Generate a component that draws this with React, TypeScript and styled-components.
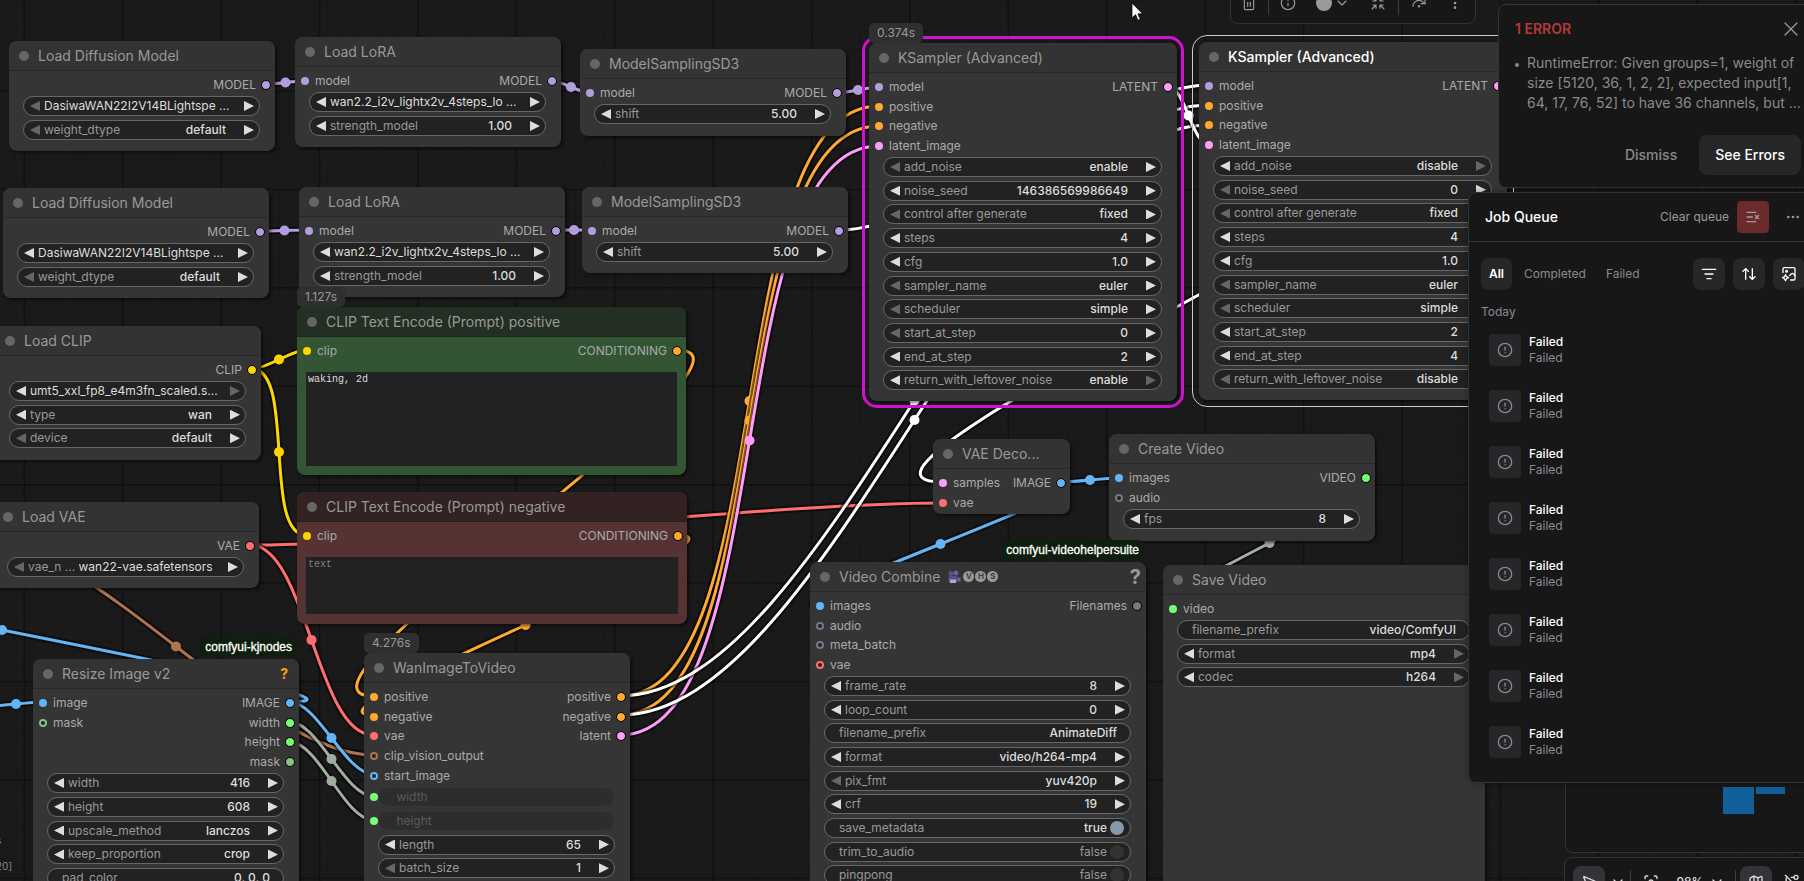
import React from 'react';
import styled, { createGlobalStyle, css } from 'styled-components';
import {
  ArrowUpDown,
  ChevronDown,
  CircleAlert,
  Ellipsis,
  EllipsisVertical,
  Focus,
  Info,
  ListFilter,
  ListX,
  Map as MapIcon,
  MousePointer2,
  RedoDot,
  RouteOff,
  Shrink,
  Trash2,
  X,
} from 'lucide-react';

const GlobalStyle = createGlobalStyle`
  *, *::before, *::after { box-sizing: border-box; }
  body {
    margin: 0;
    background: #1a1a1a;
    color: #aaa;
    font-family: Inter, "Liberation Sans", sans-serif;
    font-size: 12px;
    line-height: 16px;
  }
  button, input, select, textarea { font: inherit; color: inherit; }
  button { border: 0; padding: 0; background: none; cursor: pointer; }
`;

/* ---------- colours of the slot types ---------- */

const C = {
  model: '#b39ddb',
  cond: '#ffa931',
  latent: '#ff9cf9',
  clip: '#ffd500',
  vae: '#ff6e6e',
  image: '#64b5f6',
  mask: '#81c784',
  vision: '#ad7452',
  number: '#77ff77',
  plain: '#778',
  link: '#9fae9f',
  hot: '#ffffff',
};

/* ---------- canvas ---------- */

const Page = styled.main`
  position: relative;
  width: 100%;
  height: 100vh;
  overflow: hidden;
  background: #1a1a1a;
`;

const Wires = styled.svg`
  position: absolute;
  inset: 0;
  width: 100%;
  height: 100%;
`;

type Wire = [number, number, number, number, string];

const wires: Wire[] = [
  [250, 545, 942, 503, C.vae],
  [250, 545, 373, 735, C.vae],
  [-21, 538, 373, 755, C.vision],
  [677, 350, 373, 696, C.cond],
  [678, 535, 373, 715, C.cond],
  [252, 369, 306, 350, C.clip],
  [252, 369, 306, 535, C.clip],
  [266, 84, 305, 81, C.model],
  [260, 231, 309, 230, C.model],
  [552, 81, 590, 93, C.model],
  [556, 230, 592, 230, C.model],
  [837, 93, 879, 87, C.model],
  [290, 702, -286, 558, C.image],
  [-11, 706, 43, 702, C.image],
  [290, 702, 373, 774, C.image],
  [290, 722, 373, 796, C.link],
  [290, 742, 373, 820, C.link],
  [620, 696, 879, 106, C.cond],
  [620, 715, 879, 126, C.cond],
  [620, 735, 879, 146, C.latent],
  [1061, 482, 820, 606, C.image],
  [1061, 482, 1119, 478, C.image],
  [1366, 478, 1173, 608, C.link],
  [839, 230, 1209, 85, C.hot],
  [620, 696, 1209, 105, C.hot],
  [620, 715, 1209, 125, C.hot],
  [1168, 87, 1209, 144, C.hot],
  [1497, 85, 942, 482, C.hot],
];

function WireLayer() {
  return (
    <Wires aria-hidden="true">
      <defs>
        <pattern id="grid" x="23.6" y="90.4" width="98.4" height="98.4" patternUnits="userSpaceOnUse">
          {[1, 2, 3, 4, 5, 6, 7, 8, 9].map((i) => (
            <path
              key={i}
              d={`M${i * 9.84} 0V98.4M0 ${i * 9.84}H98.4`}
              stroke="#161616"
              strokeWidth="1"
            />
          ))}
          <path d="M0 0V98.4M0 0H98.4" stroke="#0f0f0f" strokeWidth="3" />
        </pattern>
      </defs>
      <rect width="100%" height="100%" fill="url(#grid)" />
      {wires.map(([x1, y1, x2, y2, color], i) => {
        const k = Math.hypot(x2 - x1, y2 - y1) * 0.25;
        const d = `M${x1} ${y1}C${x1 + k} ${y1} ${x2 - k} ${y2} ${x2} ${y2}`;
        return (
          <g key={i} fill="none">
            <path d={d} stroke="rgba(0,0,0,0.5)" strokeWidth="7" />
            <path d={d} stroke={color} strokeWidth="3" />
            <circle cx={(x1 + x2) / 2} cy={(y1 + y2) / 2} r="5" fill={color} />
          </g>
        );
      })}
    </Wires>
  );
}

/* ---------- node parts ---------- */

const themes = {
  gray: { head: '#333', body: '#353535' },
  green: { head: '#232f23', body: '#335533' },
  red: { head: '#332222', body: '#553333' },
};
type Tone = keyof typeof themes;

const NodeCard = styled.section<{
  $x: number;
  $y: number;
  $w: number;
  $h: number;
  $tone: Tone;
  $ring?: 'running' | 'selected';
}>`
  position: absolute;
  left: ${(p) => p.$x}px;
  top: ${(p) => p.$y}px;
  width: ${(p) => p.$w}px;
  height: ${(p) => p.$h}px;
  display: flex;
  flex-direction: column;
  border-radius: 8px;
  background: ${(p) => themes[p.$tone].body};
  box-shadow: 2px 2px 3px rgba(0, 0, 0, 0.5);
  ${(p) =>
    p.$ring === 'running' &&
    css`
      outline: 3px solid #d40fd4;
      outline-offset: 4px;
    `}
  ${(p) =>
    p.$ring === 'selected' &&
    css`
      outline: 1px solid #ccc;
      outline-offset: 6px;
    `}
`;

const NodeHead = styled.header<{ $tone: Tone; $lit?: boolean }>`
  display: flex;
  align-items: center;
  gap: 9px;
  height: 30px;
  flex: none;
  padding: 0 11px 0 10px;
  border-bottom: 1px solid rgba(0, 0, 0, 0.2);
  border-radius: 8px 8px 0 0;
  background: ${(p) => themes[p.$tone].head};
  color: ${(p) => (p.$lit ? '#fff' : '#999')};
`;

const Bullet = styled.i`
  width: 10px;
  height: 10px;
  flex: none;
  border-radius: 50%;
  background: #666;
`;

const NodeTitle = styled.h2<{ $lit?: boolean }>`
  margin: 0;
  font-size: 14px;
  line-height: 20px;
  font-weight: ${(p) => (p.$lit ? 500 : 400)};
  white-space: nowrap;
`;

const Help = styled.button<{ $big?: boolean }>`
  margin: 0 ${(p) => (p.$big ? '-6px' : '0')} 0 auto;
  font-size: ${(p) => (p.$big ? '20px' : '14px')};
  font-weight: 700;
  line-height: 20px;
  color: ${(p) => (p.$big ? '#999' : '#ffa500')};
`;

const Slots = styled.div`
  display: flex;
  justify-content: space-between;
  flex: none;
  padding: 4px 4px 1px 5px;
`;

const SlotList = styled.ul<{ $rows: number }>`
  display: grid;
  grid-template-rows: repeat(${(p) => p.$rows}, 1fr);
  height: ${(p) => Math.ceil(p.$rows * 19.68)}px;
  margin: 0;
  padding: 0;
  list-style: none;
`;

const SlotItem = styled.li<{ $out?: boolean }>`
  display: flex;
  flex-direction: ${(p) => (p.$out ? 'row-reverse' : 'row')};
  align-items: center;
  gap: 5px;
  white-space: nowrap;
`;

const Dot = styled.i<{ $color: string; $out?: boolean; $open?: boolean }>`
  width: ${(p) => (p.$out ? 10 : 8)}px;
  height: ${(p) => (p.$out ? 10 : 8)}px;
  flex: none;
  margin: 0 ${(p) => (p.$out ? 0 : 1)}px;
  border-radius: 50%;
  border: ${(p) => (p.$out ? '1px solid #000' : p.$open ? `2px solid ${p.$color}` : '0')};
  background: ${(p) => (p.$open ? '#222' : p.$color)};
`;

const WidgetList = styled.div<{ $rows: number }>`
  display: grid;
  grid-template-rows: repeat(${(p) => p.$rows}, 1fr);
  flex: none;
  height: ${(p) => Math.ceil(p.$rows * 23.62)}px;
  padding: 0 15px 0 14px;
`;

const WidgetBox = styled.div<{ $plain?: boolean; $linked?: boolean }>`
  position: relative;
  display: flex;
  align-items: center;
  height: 20px;
  padding: ${(p) => (p.$plain ? '0 13px 0 14px' : '0 5px 0 6px')};
  border: 1px solid ${(p) => (p.$linked ? 'transparent' : '#666')};
  border-radius: 10px;
  background: ${(p) => (p.$linked ? '#2d2d2d' : '#222')};
  background-clip: padding-box;
  white-space: nowrap;
`;

const WidgetSocket = styled.span`
  position: absolute;
  left: -10px;
  top: 5px;
  display: flex;
`;

const WidgetLabel = styled.label<{ $dim?: boolean }>`
  flex: none;
  color: ${(p) => (p.$dim ? '#5c5c5c' : '#999')};
`;

const valueStyle = css`
  flex: 1;
  width: 0;
  min-width: 0;
  height: 16px;
  margin: 0;
  padding: 0;
  border: 0;
  outline: 0;
  background: none;
  appearance: none;
  color: #ddd;
  font-weight: 500;
`;

const ValueInput = styled.input`
  ${valueStyle}
  text-align: right;
`;

const ValueSelect = styled.select<{ $long?: boolean }>`
  ${valueStyle}
  font-weight: ${(p) => (p.$long ? 400 : 500)};
  text-align-last: ${(p) => (p.$long ? 'left' : 'right')};
  option { color: #ddd; background: #222; }
`;

const ArrowButton = styled.button<{ $dir: 'left' | 'right'; $off?: boolean; $tight?: boolean }>`
  width: 10px;
  height: 10px;
  flex: none;
  background: ${(p) => (p.$off ? '#666' : '#ddd')};
  clip-path: ${(p) =>
    p.$dir === 'left' ? 'polygon(100% 0, 100% 100%, 0 50%)' : 'polygon(0 0, 100% 50%, 0 100%)'};
  margin: ${(p) => (p.$dir === 'left' ? '0 4px 0 0' : p.$tight ? '0 0 0 8px' : '0 0 0 18px')};
`;

const ToggleText = styled.span<{ $on?: boolean }>`
  margin-left: auto;
  color: ${(p) => (p.$on ? '#ddd' : '#999')};
  font-weight: ${(p) => (p.$on ? 500 : 400)};
`;

const Toggle = styled.input`
  appearance: none;
  width: 14px;
  height: 14px;
  margin: 0 -7px 0 3px;
  border-radius: 50%;
  background: #333;
  &:checked { background: #8899aa; }
`;

const PromptText = styled.textarea<{ $h: number }>`
  display: block;
  height: ${(p) => p.$h}px;
  margin: 10px 9px 0;
  padding: 2px;
  border: 0;
  outline: 0;
  resize: none;
  background: #222;
  color: #ddd;
  font-family: "Liberation Mono", monospace;
  font-size: 10px;
  line-height: 12px;
  &::placeholder { color: #808080; }
`;

const Badge = styled.span<{ $pack?: boolean }>`
  position: absolute;
  bottom: ${(p) => (p.$pack ? 'calc(100% + 2px)' : '100%')};
  ${(p) => (p.$pack ? 'right: 2px;' : 'left: 0;')}
  padding: 2px ${(p) => (p.$pack ? 5 : 8)}px 2px;
  border-radius: 5px;
  background: ${(p) => (p.$pack ? '#0f1f0f' : '#2f2f2f')};
  color: ${(p) => (p.$pack ? '#fff' : '#999')};
  font-family: ${(p) => (p.$pack ? '"Liberation Sans", sans-serif' : 'inherit')};
  -webkit-text-stroke: ${(p) => (p.$pack ? '0.3px #fff' : '0')};
`;

/* ---------- node model ---------- */

type Slot = { name: string; color: string; open?: boolean };
type Widget = {
  name?: string;
  value?: string;
  kind?: 'combo' | 'number' | 'text' | 'toggle' | 'linked';
  off?: 'left' | 'right';
  long?: boolean;
};
type NodeSpec = {
  title: string;
  x: number;
  y: number;
  w: number;
  h: number;
  tone?: Tone;
  ring?: 'running' | 'selected';
  time?: string;
  pack?: string;
  help?: 'small' | 'big';
  inputs?: Slot[];
  outputs?: Slot[];
  widgets?: Widget[];
  prompt?: { value?: string; placeholder?: string; h: number };
  extra?: React.ReactNode;
};

const s = (name: string, color: string, open?: boolean): Slot => ({ name, color, open });

const VhsMark = styled.span`
  display: flex;
  gap: 1px;
  align-items: center;
  margin-left: -3px;
`;

const VhsLetter = styled.b`
  width: 11px;
  height: 11px;
  border-radius: 50%;
  background: #999;
  color: #333;
  font-size: 8px;
  line-height: 11px;
  font-weight: 600;
  text-align: center;
`;

const vhs = (
  <VhsMark>
    <svg width="16" height="14" viewBox="0 0 16 14" aria-hidden="true">
      <circle cx="5" cy="3.500" r="2.500" fill="#5b4c8c" />
      <circle cx="10" cy="3" r="2.500" fill="#6c5ca0" />
      <rect x="2.500" y="6" width="9" height="6.500" rx="1" fill="#5b4c8c" />
      <path d="M11 8.500l3.500-1.500v5L11 11z" fill="#6c5ca0" />
      <rect x="4" y="9.500" width="6" height="3.500" fill="#b0a8cc" />
    </svg>
    <VhsLetter>V</VhsLetter>
    <VhsLetter>H</VhsLetter>
    <VhsLetter>S</VhsLetter>
  </VhsMark>
);

const samplerInputs = [
  s('model', C.model),
  s('positive', C.cond),
  s('negative', C.cond),
  s('latent_image', C.latent),
];

const nodes: NodeSpec[] = [
  {
    title: 'Load Diffusion Model', x: 9, y: 41, w: 266, h: 110,
    outputs: [s('MODEL', C.model)],
    widgets: [
      { value: 'DasiwaWAN22I2V14BLightspe ...', off: 'left', long: true },
      { name: 'weight_dtype', value: 'default', off: 'left' },
    ],
  },
  {
    title: 'Load Diffusion Model', x: 3, y: 188, w: 266, h: 110,
    outputs: [s('MODEL', C.model)],
    widgets: [
      { value: 'DasiwaWAN22I2V14BLightspe ...', long: true },
      { name: 'weight_dtype', value: 'default', off: 'left' },
    ],
  },
  {
    title: 'Load LoRA', x: 295, y: 37, w: 266, h: 110,
    inputs: [s('model', C.model)],
    outputs: [s('MODEL', C.model)],
    widgets: [
      { value: 'wan2.2_i2v_lightx2v_4steps_lo ...', long: true },
      { name: 'strength_model', value: '1.00', kind: 'number' },
    ],
  },
  {
    title: 'Load LoRA', x: 299, y: 187, w: 266, h: 110,
    inputs: [s('model', C.model)],
    outputs: [s('MODEL', C.model)],
    widgets: [
      { value: 'wan2.2_i2v_lightx2v_4steps_lo ...', long: true },
      { name: 'strength_model', value: '1.00', kind: 'number' },
    ],
  },
  {
    title: 'ModelSamplingSD3', x: 580, y: 49, w: 266, h: 87,
    inputs: [s('model', C.model)],
    outputs: [s('MODEL', C.model)],
    widgets: [{ name: 'shift', value: '5.00', kind: 'number' }],
  },
  {
    title: 'ModelSamplingSD3', x: 582, y: 187, w: 266, h: 86,
    inputs: [s('model', C.model)],
    outputs: [s('MODEL', C.model)],
    widgets: [{ name: 'shift', value: '5.00', kind: 'number' }],
  },
  {
    title: 'Load CLIP', x: -5, y: 326, w: 266, h: 134,
    outputs: [s('CLIP', C.clip)],
    widgets: [
      { value: 'umt5_xxl_fp8_e4m3fn_scaled.s...', off: 'right', long: true },
      { name: 'type', value: 'wan' },
      { name: 'device', value: 'default', off: 'left' },
    ],
  },
  {
    title: 'Load VAE', x: -7, y: 502, w: 266, h: 86,
    outputs: [s('VAE', C.vae)],
    widgets: [{ name: 'vae_n ...\u00a0', value: 'wan22-vae.safetensors', off: 'left', long: true }],
  },
  {
    title: 'CLIP Text Encode (Prompt) positive', x: 297, y: 307, w: 389, h: 168, tone: 'green',
    time: '1.127s',
    inputs: [s('clip', C.clip)],
    outputs: [s('CONDITIONING', C.cond)],
    prompt: { value: 'waking, 2d', h: 94 },
  },
  {
    title: 'CLIP Text Encode (Prompt) negative', x: 297, y: 492, w: 390, h: 132, tone: 'red',
    inputs: [s('clip', C.clip)],
    outputs: [s('CONDITIONING', C.cond)],
    prompt: { placeholder: 'text', h: 57 },
  },
  {
    title: 'Resize Image v2', x: 33, y: 659, w: 266, h: 300, pack: 'comfyui-kjnodes', help: 'small',
    inputs: [s('image', C.image), s('mask', C.mask, true)],
    outputs: [s('IMAGE', C.image), s('width', C.number), s('height', C.number), s('mask', C.mask)],
    widgets: [
      { name: 'width', value: '416', kind: 'number' },
      { name: 'height', value: '608', kind: 'number' },
      { name: 'upscale_method', value: 'lanczos' },
      { name: 'keep_proportion', value: 'crop' },
      { name: 'pad_color', value: '0, 0, 0', kind: 'text' },
    ],
  },
  {
    title: 'WanImageToVideo', x: 364, y: 653, w: 266, h: 300, time: '4.276s',
    inputs: [
      s('positive', C.cond),
      s('negative', C.cond),
      s('vae', C.vae),
      s('clip_vision_output', C.vision, true),
      s('start_image', C.image, true),
    ],
    outputs: [s('positive', C.cond), s('negative', C.cond), s('latent', C.latent)],
    widgets: [
      { name: 'width', kind: 'linked' },
      { name: 'height', kind: 'linked' },
      { name: 'length', value: '65', kind: 'number' },
      { name: 'batch_size', value: '1', kind: 'number', off: 'left' },
    ],
  },
  {
    title: 'KSampler (Advanced)', x: 869, y: 43, w: 308, h: 358, ring: 'running', time: '0.374s',
    inputs: samplerInputs,
    outputs: [s('LATENT', C.latent)],
    widgets: [
      { name: 'add_noise', value: 'enable', off: 'left' },
      { name: 'noise_seed', value: '146386569986649', kind: 'number' },
      { name: 'control after generate', value: 'fixed', off: 'left' },
      { name: 'steps', value: '4', kind: 'number' },
      { name: 'cfg', value: '1.0', kind: 'number' },
      { name: 'sampler_name', value: 'euler', off: 'left' },
      { name: 'scheduler', value: 'simple', off: 'left' },
      { name: 'start_at_step', value: '0', kind: 'number', off: 'left' },
      { name: 'end_at_step', value: '2', kind: 'number' },
      { name: 'return_with_leftover_noise', value: 'enable', off: 'right' },
    ],
  },
  {
    title: 'KSampler (Advanced)', x: 1199, y: 42, w: 308, h: 358, ring: 'selected',
    inputs: samplerInputs,
    outputs: [s('LATENT', C.latent)],
    widgets: [
      { name: 'add_noise', value: 'disable', off: 'right' },
      { name: 'noise_seed', value: '0', kind: 'number', off: 'left' },
      { name: 'control after generate', value: 'fixed', off: 'left' },
      { name: 'steps', value: '4', kind: 'number' },
      { name: 'cfg', value: '1.0', kind: 'number' },
      { name: 'sampler_name', value: 'euler', off: 'left' },
      { name: 'scheduler', value: 'simple', off: 'left' },
      { name: 'start_at_step', value: '2', kind: 'number' },
      { name: 'end_at_step', value: '4', kind: 'number' },
      { name: 'return_with_leftover_noise', value: 'disable', off: 'left' },
    ],
  },
  {
    title: 'VAE Deco...', x: 933, y: 439, w: 137, h: 75,
    inputs: [s('samples', C.latent), s('vae', C.vae)],
    outputs: [s('IMAGE', C.image)],
  },
  {
    title: 'Create Video', x: 1109, y: 434, w: 266, h: 107,
    inputs: [s('images', C.image), s('audio', C.plain, true)],
    outputs: [s('VIDEO', C.number)],
    widgets: [{ name: 'fps', value: '8', kind: 'number' }],
  },
  {
    title: 'Video Combine', x: 810, y: 562, w: 336, h: 420, pack: 'comfyui-videohelpersuite',
    help: 'big',
    extra: vhs,
    inputs: [
      s('images', C.image),
      s('audio', C.plain, true),
      s('meta_batch', C.plain, true),
      s('vae', C.vae, true),
    ],
    outputs: [s('Filenames', C.plain)],
    widgets: [
      { name: 'frame_rate', value: '8', kind: 'number' },
      { name: 'loop_count', value: '0', kind: 'number' },
      { name: 'filename_prefix', value: 'AnimateDiff', kind: 'text' },
      { name: 'format', value: 'video/h264-mp4' },
      { name: 'pix_fmt', value: 'yuv420p', off: 'left' },
      { name: 'crf', value: '19', kind: 'number' },
      { name: 'save_metadata', value: 'true', kind: 'toggle' },
      { name: 'trim_to_audio', value: 'false', kind: 'toggle' },
      { name: 'pingpong', value: 'false', kind: 'toggle' },
    ],
  },
  {
    title: 'Save Video', x: 1163, y: 565, w: 322, h: 400,
    inputs: [s('video', C.number)],
    widgets: [
      { name: 'filename_prefix', value: 'video/ComfyUI', kind: 'text' },
      { name: 'format', value: 'mp4', off: 'right' },
      { name: 'codec', value: 'h264', off: 'right' },
    ],
  },
];

function WidgetRow({ widget, id }: { widget: Widget; id: string }) {
  const { name, value = '', kind = 'combo', off, long } = widget;
  if (kind === 'linked') {
    return (
      <WidgetBox $plain $linked>
        <WidgetSocket>
          <Dot $color={C.number} />
        </WidgetSocket>
        <WidgetLabel as="span" $dim>&nbsp;{name}</WidgetLabel>
      </WidgetBox>
    );
  }
  if (kind === 'toggle') {
    return (
      <WidgetBox $plain>
        <WidgetLabel htmlFor={id}>{name}</WidgetLabel>
        <ToggleText $on={value === 'true'}>{value}</ToggleText>
        <Toggle id={id} type="checkbox" defaultChecked={value === 'true'} />
      </WidgetBox>
    );
  }
  if (kind === 'text') {
    return (
      <WidgetBox $plain>
        <WidgetLabel htmlFor={id}>{name}</WidgetLabel>
        <ValueInput id={id} type="text" defaultValue={value} />
      </WidgetBox>
    );
  }
  return (
    <WidgetBox>
      <ArrowButton type="button" aria-label="Previous" $dir="left" $off={off === 'left'} />
      {name && <WidgetLabel htmlFor={id}>{name}</WidgetLabel>}
      {kind === 'number' ? (
        <ValueInput id={id} type="text" inputMode="decimal" defaultValue={value} />
      ) : (
        <ValueSelect id={id} aria-label={name ?? 'Model file'} defaultValue={value} $long={long}>
          <option value={value}>{value}</option>
        </ValueSelect>
      )}
      <ArrowButton type="button" aria-label="Next" $dir="right" $off={off === 'right'} $tight={long} />
    </WidgetBox>
  );
}

function GraphNode({ node, id }: { node: NodeSpec; id: string }) {
  const tone = node.tone ?? 'gray';
  const lit = node.ring === 'selected';
  const inputs = node.inputs ?? [];
  const outputs = node.outputs ?? [];
  const rows = Math.max(inputs.length, outputs.length);
  return (
    <NodeCard $x={node.x} $y={node.y} $w={node.w} $h={node.h} $tone={tone} $ring={node.ring}>
      {node.time && <Badge>{node.time}</Badge>}
      {node.pack && <Badge $pack>{node.pack}</Badge>}
      <NodeHead $tone={tone} $lit={lit}>
        <Bullet />
        <NodeTitle $lit={lit}>{node.title}</NodeTitle>
        {node.extra}
        {node.help && (
          <Help type="button" $big={node.help === 'big'}>
            ?
          </Help>
        )}
      </NodeHead>
      <Slots>
        <SlotList $rows={rows}>
          {inputs.map((slot) => (
            <SlotItem key={slot.name}>
              <Dot $color={slot.color} $open={slot.open} />
              {slot.name}
            </SlotItem>
          ))}
        </SlotList>
        <SlotList $rows={rows}>
          {outputs.map((slot) => (
            <SlotItem key={slot.name} $out>
              <Dot $color={slot.color} $out />
              {slot.name}
            </SlotItem>
          ))}
        </SlotList>
      </Slots>
      {node.widgets && (
        <WidgetList $rows={node.widgets.length}>
          {node.widgets.map((w, i) => (
            <WidgetRow key={i} widget={w} id={`${id}-${i}`} />
          ))}
        </WidgetList>
      )}
      {node.prompt && (
        <PromptText
          aria-label={node.title}
          spellCheck={false}
          $h={node.prompt.h}
          defaultValue={node.prompt.value}
          placeholder={node.prompt.placeholder}
        />
      )}
    </NodeCard>
  );
}

/* ---------- floating chrome ---------- */

const panel = css`
  position: absolute;
  background: #171718;
  border: 1px solid #333436;
`;

const SelectionBar = styled.div`
  ${panel}
  top: -18px;
  right: 328px;
  height: 42px;
  display: flex;
  align-items: center;
  padding: 0 12px 0 10px;
  border-radius: 8px;
  color: #9a9a9a;
`;

const BarGroup = styled.div`
  display: flex;
  align-items: center;
  gap: 20px;
`;

const BarButton = styled.button`
  display: flex;
  align-items: center;
  justify-content: center;
  gap: 2px;
  height: 32px;
`;

const Rule = styled.i<{ $gap?: number }>`
  width: 1px;
  height: 24px;
  flex: none;
  margin: 0 ${(p) => p.$gap ?? 0}px;
  background: #3c3d40;
`;

const Swatch = styled.i`
  width: 16px;
  height: 16px;
  border-radius: 50%;
  background: #9a9a9a;
`;

const ErrorPanel = styled.section`
  ${panel}
  top: 4px;
  right: -15px;
  width: 321px;
  display: flex;
  flex-direction: column;
  padding: 12px 17px 12px 16px;
  border-radius: 8px;
`;

const ErrorHead = styled.header`
  display: flex;
  align-items: center;
  justify-content: space-between;
  height: 24px;
`;

const ErrorTitle = styled.h2`
  margin: 0;
  font-size: 14px;
  line-height: 20px;
  font-weight: 600;
  color: #b33a3a;
`;

const IconButton = styled.button`
  display: flex;
  margin-right: -2px;
  color: #9a9a9a;
`;

const ErrorList = styled.ul`
  margin: 12px 0 22px;
  padding-left: 12px;
  font-size: 14px;
  line-height: 20px;
  color: #8a8a8a;
  list-style: none;
  li { position: relative; margin-right: -4px; }
  li::before {
    content: "";
    position: absolute;
    left: -12px;
    top: 10px;
    width: 4px;
    height: 4px;
    border-radius: 50%;
    background: #8a8a8a;
  }
`;

const ErrorActions = styled.footer`
  display: flex;
  justify-content: flex-end;
  gap: 6px;
`;

const ActionButton = styled.button<{ $main?: boolean }>`
  height: 40px;
  padding: 0 16px;
  border-radius: 8px;
  font-size: 14px;
  line-height: 20px;
  font-weight: 500;
  color: ${(p) => (p.$main ? '#fff' : '#8a8a8a')};
  background: ${(p) => (p.$main ? '#262729' : 'none')};
`;

const QueuePanel = styled.aside`
  ${panel}
  top: 192px;
  right: -15px;
  width: 351px;
  border-radius: 8px;
  padding-bottom: 24px;
  box-shadow: 0 0 6px rgba(0, 0, 0, 0.4);
`;

const QueueHead = styled.header`
  display: flex;
  align-items: center;
  height: 49px;
  padding: 0 15px 0 16px;
  border-bottom: 1px solid #333436;
`;

const QueueTitle = styled.h2`
  margin: 0 auto 0 0;
  font-size: 14px;
  line-height: 20px;
  font-weight: 500;
  color: #fff;
`;

const ClearLabel = styled.span`
  margin-right: 8px;
  color: #9a9a9a;
`;

const SquareButton = styled.button<{ $danger?: boolean }>`
  display: flex;
  align-items: center;
  justify-content: center;
  width: 32px;
  height: 32px;
  flex: none;
  border-radius: ${(p) => (p.$danger ? 4 : 8)}px;
  color: ${(p) => (p.$danger ? '#a89a9a' : '#fff')};
  background: ${(p) => (p.$danger ? '#6b2a2c' : '#262729')};
`;

const MoreButton = styled.button`
  display: flex;
  margin-left: 16px;
  width: 18px;
  color: #9a9a9a;
`;

const Filters = styled.div`
  display: flex;
  align-items: center;
  gap: 8px;
  padding: 16px 13px 0 12px;
`;

const Tabs = styled.div`
  display: flex;
  margin-right: auto;
`;

const Tab = styled.button<{ $on?: boolean }>`
  height: 32px;
  padding: 0 ${(p) => (p.$on ? 8 : 10)}px;
  margin-right: ${(p) => (p.$on ? 2 : 0)}px;
  border-radius: 8px;
  color: ${(p) => (p.$on ? '#fff' : '#8a8a8a')};
  background: ${(p) => (p.$on ? '#262729' : 'none')};
  font-weight: ${(p) => (p.$on ? 600 : 400)};
`;

const DayLabel = styled.h3`
  margin: 14px 12px;
  font-size: 12px;
  line-height: 16px;
  font-weight: 400;
  color: #8a8992;
`;

const Jobs = styled.ul`
  display: flex;
  flex-direction: column;
  gap: 24px;
  margin: 0;
  padding: 0 20px;
  list-style: none;
`;

const Job = styled.li`
  display: flex;
  align-items: center;
  gap: 8px;
`;

const JobIcon = styled.span`
  display: flex;
  align-items: center;
  justify-content: center;
  width: 32px;
  height: 32px;
  border-radius: 4px;
  background: #262729;
  color: #8a8992;
`;

const JobText = styled.p`
  margin: 0;
  display: flex;
  flex-direction: column;
  color: #8a8992;
  strong { color: #fff; font-weight: 500; }
`;

const MiniMap = styled.div`
  ${panel}
  right: -15px;
  bottom: 28px;
  width: 254px;
  height: 100px;
  border-radius: 8px;
  svg { display: block; }
`;

const ViewBar = styled.div`
  ${panel}
  right: -15px;
  bottom: -25px;
  width: 255px;
  height: 49px;
  display: flex;
  align-items: center;
  padding: 0 8px;
  border-radius: 8px;
  color: #ddd;
`;

const ViewButton = styled.button<{ $w: number; $on?: boolean }>`
  display: flex;
  align-items: center;
  justify-content: center;
  width: ${(p) => p.$w}px;
  height: 32px;
  flex: none;
  border-radius: 8px;
  font-weight: 500;
  background: ${(p) => (p.$on ? '#333437' : 'none')};
`;

const MapGroup = styled.div`
  display: flex;
  align-items: center;
  gap: 4px;
  margin-left: 10px;
`;

const CanvasInfo = styled.div`
  position: absolute;
  left: -4px;
  bottom: 7px;
  display: flex;
  flex-direction: column;
  gap: 10px;
  font-size: 10px;
  line-height: 16px;
  color: #888;
`;

const Pointer = styled.svg`
  position: absolute;
  left: 1131px;
  top: 2px;
`;

function AssetsIcon() {
  return (
    <svg width="16" height="16" viewBox="0 0 16 16" fill="none" stroke="currentColor" strokeWidth="1.300" strokeLinecap="round" strokeLinejoin="round">
      <path d="M2 6.500V3a1.300 1.300 0 0 1 1.300-1.300h9.400A1.300 1.300 0 0 1 14 3v9.700a1.300 1.300 0 0 1-1.300 1.300H9.500" />
      <circle cx="5.600" cy="5.300" r="0.900" />
      <path d="M14 9.500l-1.700-1.700a1.300 1.300 0 0 0-1.900 0L8.700 9.500" />
      <path d="M4.500 8.700l1 2 2 1-2 1-1 2-1-2-2-1 2-1z" />
    </svg>
  );
}

export default function App() {
  return (
    <Page>
      <GlobalStyle />
      <WireLayer />
      <CanvasInfo>
        <span>s</span>
        <span>20]</span>
      </CanvasInfo>
      {nodes.map((node, i) => (
        <GraphNode key={i} node={node} id={`node${i}`} />
      ))}

      <SelectionBar role="toolbar" aria-label="Selection">
        <BarButton type="button" aria-label="Delete"><Trash2 size={16} strokeWidth={1.75} /></BarButton>
        <Rule $gap={11} />
        <BarGroup>
          <BarButton type="button" aria-label="Info"><Info size={16} strokeWidth={1.75} /></BarButton>
          <BarButton type="button" aria-label="Color">
            <Swatch />
            <ChevronDown size={16} strokeWidth={1.75} />
          </BarButton>
          <BarButton type="button" aria-label="Collapse"><Shrink size={16} strokeWidth={1.75} /></BarButton>
        </BarGroup>
        <Rule $gap={12} />
        <BarGroup>
          <BarButton type="button" aria-label="Bypass"><RedoDot size={16} strokeWidth={1.75} /></BarButton>
          <BarButton type="button" aria-label="More"><EllipsisVertical size={16} /></BarButton>
        </BarGroup>
      </SelectionBar>

      <Pointer width="12" height="20" viewBox="0 0 12 20" aria-hidden="true">
        <path d="M1 1v15l3.600-3.400 2.300 5.700 2.300-1-2.300-5.500H11.500z" fill="#fff" stroke="#000" strokeWidth="0.700" />
      </Pointer>

      <MiniMap>
        <svg width="252" height="98" aria-hidden="true">
          <rect x="157" y="33" width="31" height="27" fill="#11609c" />
          <rect x="190" y="33" width="29" height="7" fill="#11609c" />
        </svg>
      </MiniMap>

      <ErrorPanel role="alert">
        <ErrorHead>
          <ErrorTitle>1 ERROR</ErrorTitle>
          <IconButton type="button" aria-label="Close"><X size={24} strokeWidth={1.25} /></IconButton>
        </ErrorHead>
        <ErrorList>
          <li>RuntimeError: Given groups=1, weight of size [5120, 36, 1, 2, 2], expected input[1, 64, 17, 76, 52] to have 36 channels, but ...</li>
        </ErrorList>
        <ErrorActions>
          <ActionButton type="button">Dismiss</ActionButton>
          <ActionButton type="button" $main>See Errors</ActionButton>
        </ErrorActions>
      </ErrorPanel>

      <QueuePanel>
        <QueueHead>
          <QueueTitle>Job Queue</QueueTitle>
          <ClearLabel>Clear queue</ClearLabel>
          <SquareButton type="button" $danger aria-label="Clear queue"><ListX size={16} /></SquareButton>
          <MoreButton type="button" aria-label="More"><Ellipsis size={16} /></MoreButton>
        </QueueHead>
        <Filters>
          <Tabs>
            <Tab type="button" $on>All</Tab>
            <Tab type="button">Completed</Tab>
            <Tab type="button">Failed</Tab>
          </Tabs>
          <SquareButton type="button" aria-label="Filter"><ListFilter size={16} /></SquareButton>
          <SquareButton type="button" aria-label="Sort"><ArrowUpDown size={16} /></SquareButton>
          <SquareButton type="button" aria-label="Assets"><AssetsIcon /></SquareButton>
        </Filters>
        <DayLabel>Today</DayLabel>
        <Jobs>
          {Array.from({ length: 8 }, (_, i) => (
            <Job key={i}>
              <JobIcon><CircleAlert size={16} /></JobIcon>
              <JobText>
                <strong>Failed</strong>
                <span>Failed</span>
              </JobText>
            </Job>
          ))}
        </Jobs>
      </QueuePanel>

      <ViewBar role="toolbar" aria-label="View">
        <ViewButton $w={32} $on type="button" aria-label="Select"><MousePointer2 size={16} /></ViewButton>
        <ViewButton $w={25} type="button" aria-label="Modes"><ChevronDown size={16} /></ViewButton>
        <Rule />
        <ViewButton $w={40} type="button" aria-label="Fit view"><Focus size={16} /></ViewButton>
        <ViewButton $w={38} type="button">98%</ViewButton>
        <ViewButton $w={16} type="button" aria-label="Zoom levels"><ChevronDown size={16} /></ViewButton>
        <MapGroup>
          <Rule />
          <ViewButton $w={32} $on type="button" aria-label="Minimap"><MapIcon size={16} /></ViewButton>
          <ViewButton $w={32} type="button" aria-label="Links"><RouteOff size={16} /></ViewButton>
        </MapGroup>
      </ViewBar>
    </Page>
  );
}
